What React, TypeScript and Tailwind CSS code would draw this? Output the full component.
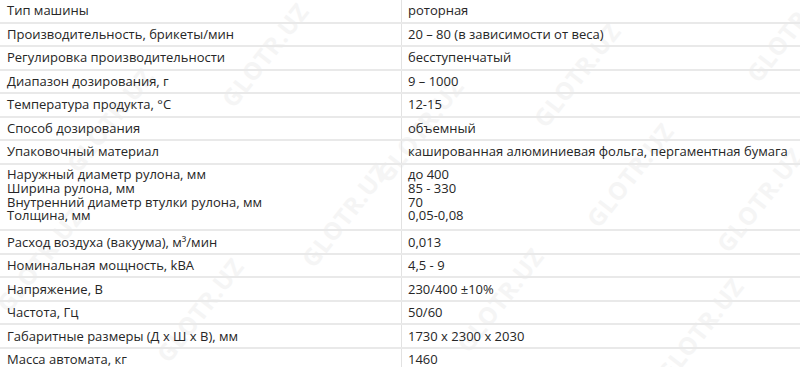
const rows: [string[], string[]][] = [
  [["Тип машины"], ["роторная"]],
  [["Производительность, брикеты/мин"], ["20 – 80 (в зависимости от веса)"]],
  [["Регулировка производительности"], ["бесступенчатый"]],
  [["Диапазон дозирования, г"], ["9 – 1000"]],
  [["Температура продукта, °C"], ["12-15"]],
  [["Способ дозирования"], ["объемный"]],
  [["Упаковочный материал"], ["кашированная алюминиевая фольга, пергаментная бумага"]],
  [
    ["Наружный диаметр рулона, мм", "Ширина рулона, мм", "Внутренний диаметр втулки рулона, мм", "Толщина, мм"],
    ["до 400", "85 - 330", "70", "0,05-0,08"],
  ],
  [["Расход воздуха (вакуума), м³/мин"], ["0,013"]],
  [["Номинальная мощность, kВА"], ["4,5 - 9"]],
  [["Напряжение, В"], ["230/400 ±10%"]],
  [["Частота, Гц"], ["50/60"]],
  [["Габаритные размеры (Д х Ш х В), мм"], ["1730 х 2300 х 2030"]],
  [["Масса автомата, кг"], ["1460"]],
]

// watermark centres, roughly where they sit in the screenshot
const marks = [
  [265, 55], [577, 75], [790, 30], [110, 120], [420, 130],
  [345, 215], [630, 175], [760, 200], [40, 260], [200, 310],
  [500, 300], [700, 330],
]

export default function App() {
  return (
    <div
      className="relative w-[800px] h-[367px] overflow-hidden bg-white text-[13px] font-medium text-[#262626]"
      style={{ fontFamily: "'Open Sans', 'Liberation Sans', sans-serif" }}
    >
      {/* watermark */}
      {marks.map(([x, y], i) => (
        <div
          key={i}
          className="pointer-events-none absolute -translate-x-1/2 -translate-y-1/2 -rotate-[52deg] whitespace-nowrap text-[24px] font-bold tracking-wide text-[#f5f5f5] select-none"
          style={{ left: x, top: y }}
        >
          GLOTR.UZ
        </div>
      ))}

      <div className="relative">
        {rows.map(([left, right], i) => {
          const tall = left.length > 1
          const pad = tall ? "pt-[3.7px] pb-[6.3px] leading-[13.7px]" : "py-[3.25px] leading-[15px]"
          return (
            <div key={i} className="flex border-b-2 border-[#e9e9e9]">
              <div className={`w-[402px] shrink-0 border-r border-[#e2e2e2] px-[7px] ${pad}`}>
                {left.map((t, j) => (
                  <div key={j}>{t}</div>
                ))}
              </div>
              <div className={`flex-1 px-[6px] ${pad}`}>
                {right.map((t, j) => (
                  <div key={j}>{t}</div>
                ))}
              </div>
            </div>
          )
        })}
      </div>
    </div>
  )
}
